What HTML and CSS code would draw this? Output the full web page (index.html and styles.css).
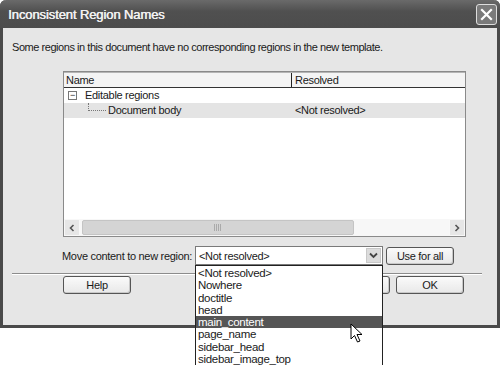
FILE: index.html
```html
<!DOCTYPE html>
<html>
	<head>
		<meta charset="UTF-8">
		<title>Inconsistent Region Names</title>
		<link rel="stylesheet" href="styles.css">
	</head>
	<body>
		<div class="dialog">
			<div class="titlebar">
				<span class="title">Inconsistent Region Names</span>
				<span class="close">
					<svg width="15" height="15" viewBox="0 0 15 15"><path d="M3 3 L12 12 M12 3 L3 12" stroke="#fff" stroke-width="2.2" stroke-linecap="square"/></svg>
				</span>
			</div>

			<div class="content">
				<p class="msg">Some regions in this document have no corresponding regions in the new template.</p>

				<div class="list">
					<div class="list-head">
						<div class="col-name">Name</div>
						<div class="col-res">Resolved</div>
					</div>
					<div class="rows">
						<div class="row">
							<div class="col-name"><span class="toggle">−</span>Editable regions</div>
							<div class="col-res"></div>
						</div>
						<div class="row sel">
							<div class="col-name"><span class="tree"></span>Document body</div>
							<div class="col-res">&lt;Not resolved&gt;</div>
						</div>
					</div>
					<div class="hscroll">
						<span class="sbtn">
							<svg width="8" height="8" viewBox="0 0 8 8"><path d="M5.5 1 L2.5 4 L5.5 7" fill="none" stroke="#555" stroke-width="1.6"/></svg>
						</span>
						<span class="thumb"><span class="grip"></span></span>
						<span class="track"></span>
						<span class="sbtn">
							<svg width="8" height="8" viewBox="0 0 8 8"><path d="M2.5 1 L5.5 4 L2.5 7" fill="none" stroke="#555" stroke-width="1.6"/></svg>
						</span>
					</div>
				</div>

				<div class="move-row">
					<span class="label">Move content to new region:</span>
					<div class="select">
						<span class="value">&lt;Not resolved&gt;</span>
						<span class="arrow">
							<svg width="9" height="7" viewBox="0 0 9 7"><path d="M1 1.5 L4.5 5 L8 1.5" fill="none" stroke="#444" stroke-width="1.8"/></svg>
						</span>
					</div>
					<span class="btn btn-small">Use for all</span>
				</div>

				<div class="sep"></div>

				<div class="buttons">
					<span class="btn">Help</span>
					<div class="right-btns">
						<span class="btn">Cancel</span>
						<span class="btn">OK</span>
					</div>
				</div>
			</div>
		</div>

		<ul class="dropdown">
			<li>&lt;Not resolved&gt;</li>
			<li>Nowhere</li>
			<li>doctitle</li>
			<li>head</li>
			<li class="hl">main_content</li>
			<li>page_name</li>
			<li>sidebar_head</li>
			<li>sidebar_image_top</li>
		</ul>

		<svg class="cursor" width="14" height="21" viewBox="0 0 14 21"><path d="M1 1 L1 16 L4.5 12.5 L7.5 19 L10 18 L7 11.5 L12 11.5 Z" fill="#fff" stroke="#000" stroke-width="1"/></svg>
	</body>
</html>
```

FILE: styles.css
```css
*{
	margin:0; padding:0;
	list-style: none;
	box-sizing: border-box;
}

body{
	background:#fff;
	width:500px;
	height:365px;
	position: relative;
	overflow: hidden;
	font-family:"Liberation Sans", "DejaVu Sans", sans-serif;
	font-size:11px;
	letter-spacing:-0.3px;
	color:#1a1a1a;
}

.dialog{
	width:500px;
	height:328px;
	background:#e6e6e6;
	border:3px solid #4a4a4a;
	border-top:none;
	border-radius:6px 6px 0 0;
	display: flex;
	flex-direction: column;
}

.titlebar{
	height:28px;
	margin:0 -3px;
	background:linear-gradient(#6a6a6a, #505050 40%, #4c4c4c);
	border-radius:6px 6px 0 0;
	display: flex;
	align-items: center;
	justify-content: space-between;
	padding:0 3px 0 8px;
}

.title{
	color:#f2f2f2;
	font-size:13px;
	letter-spacing:-0.1px;
	text-shadow:0.5px 0 0 #f2f2f2;
}

.close{
	width:21px;
	height:21px;
	border:1px solid #ddd;
	border-radius:3px;
	background:#7a7a7a;
	display: flex;
	align-items: center;
	justify-content: center;
}

.content{
	flex-grow: 1;
	display: flex;
	flex-direction: column;
}

.msg{
	margin:12px 0 0 9px;
	height:14px;
	line-height:14px;
	letter-spacing:-0.45px;
}

.list{
	margin:17px 0 0 60px;
	width:403px;
	height:166px;
	background:#fff;
	border:1px solid #8a8a8a;
	display: flex;
	flex-direction: column;
}

.list-head{
	display: flex;
	height:16px;
	line-height:14px;
	background:#f4f4f4;
	border-top:1px solid #b5b5b5;
	border-bottom:1px solid #333;
}

.col-name{
	width:228px;
	padding-left:2px;
	display: flex;
	align-items: center;
}

.col-res{
	flex-grow: 1;
	padding-left:3px;
}

.list-head .col-name{
	border-right:1px solid #222;
}

.rows{
	flex-grow: 1;
}

.row{
	display: flex;
	height:15px;
	line-height:15px;
}

.row.sel{
	background:#e4e4e4;
}

.toggle{
	width:9px;
	height:9px;
	border:1px solid #777;
	background:#fff;
	font-size:9px;
	line-height:6px;
	text-align: center;
	margin:0 8px 0 2px;
}

.tree{
	width:18px;
	height:8px;
	margin:0 2px 0 22px;
	align-self: flex-start;
	border-left:1px dotted #777;
	border-bottom:1px dotted #777;
}

.hscroll{
	height:17px;
	display: flex;
	background:#f7f7f7;
}

.sbtn{
	width:16px;
	background:#e6e6e6;
	border:1px solid #f8f8f8;
	display: flex;
	align-items: center;
	justify-content: center;
}

.thumb{
	width:272px;
	margin:1px 0 1px 2px;
	background:#d4d4d4;
	border:1px solid #c4c4c4;
	border-radius:2px;
	display: flex;
	align-items: center;
	justify-content: center;
}

.grip{
	width:8px;
	height:7px;
	background:repeating-linear-gradient(90deg, #aaa 0 1px, transparent 1px 2px);
}

.track{
	flex-grow: 1;
}

.move-row{
	margin:9px 0 0 59px;
	display: flex;
	align-items: center;
	height:19px;
}

.label{
	width:133px;
	flex-shrink: 0;
	white-space: nowrap;
}

.select{
	width:188px;
	flex-shrink: 0;
	height:19px;
	background:#fff;
	border:1px solid #7a7a7a;
	display: flex;
	align-items: center;
	justify-content: space-between;
	padding:0 1px 0 3px;
}

.arrow{
	width:15px;
	height:15px;
	background:#dcdcdc;
	border:1px solid #c8c8c8;
	display: flex;
	align-items: center;
	justify-content: center;
}

.btn{
	display: flex;
	align-items: center;
	justify-content: center;
	width:68px;
	height:18px;
	background:linear-gradient(#fafafa, #e8e8e8);
	border:1px solid #555;
	border-radius:3px;
	box-shadow:inset -1px -1px 0 #c8c8c8;
	flex-shrink: 0;
}

.btn-small{
	margin-left:3px;
}

.sep{
	margin:8px 15px 0 9px;
	height:2px;
	border-top:1px solid #8c8c8c;
	border-bottom:1px solid #fff;
}

.buttons{
	margin:1px 33px 0 60px;
	display: flex;
	justify-content: space-between;
}

.right-btns{
	display: flex;
	gap:6px;
}

.dropdown{
	position: absolute;
	left:195px;
	top:265px;
	width:188px;
	height:101px;
	background:#fff;
	border:1px solid #222;
	padding-top:1px;
}

.dropdown li{
	height:12.3px;
	line-height:12.3px;
	padding-left:2px;
	font-size:11.5px;
}

.dropdown li.hl{
	background:#555;
	color:#fff;
}

.cursor{
	position: absolute;
	left:350px;
	top:323px;
}
```
